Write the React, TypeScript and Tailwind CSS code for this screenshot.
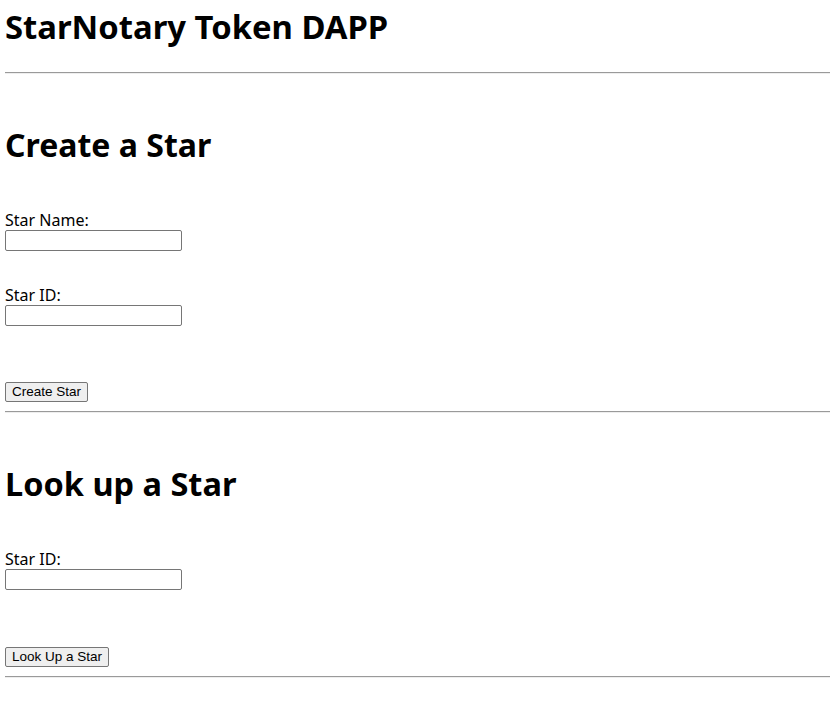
import React from 'react';

const Rule: React.FC<{ className?: string }> = ({ className = '' }) => (
  <hr className={`h-0 border-0 border-t border-t-[#9a9a9a] border-b border-b-[#eeeeee] ${className}`} />
);

const Field: React.FC<{ label: string; className?: string }> = ({ label, className = '' }) => (
  <div className={className}>
    <label className="block text-[16px] leading-[20px] text-black">{label}</label>
    <input
      type="text"
      className="block w-[177px] h-[21px] border border-[#767676] rounded-[2px] bg-white px-[2px] text-[13.33px] outline-none"
    />
  </div>
);

const Button: React.FC<{ children: React.ReactNode; className?: string }> = ({ children, className = '' }) => (
  <button
    className={`block h-[20px] px-[6px] border border-[#767676] rounded-[2px] bg-[#efefef] text-[13.5px] leading-[16px] text-black ${className}`}
    style={{ fontFamily: '"Liberation Sans", Arial, sans-serif' }}
  >
    {children}
  </button>
);

export default function App() {
  return (
    <div
      className="min-h-[707px] bg-white pt-[6.6px] pl-[5px] pr-[1px] text-black"
      style={{ fontFamily: '"Noto Sans", "Open Sans", sans-serif' }}
    >
      <h1 className="text-[32.8px] leading-[40px] font-bold">StarNotary Token DAPP</h1>
      <Rule className="mt-[25.4px]" />

      {/* Create a star */}
      <h2 className="mt-[49px] text-[32px] leading-[44px] font-bold">Create a Star</h2>
      <Field label="Star Name:" className="mt-[43.4px]" />
      <Field label="Star ID:" className="mt-[34px]" />
      <Button className="mt-[56px]">Create Star</Button>
      <Rule className="mt-[9px]" />

      {/* Look up a star */}
      <h2 className="mt-[48.4px] text-[32.5px] leading-[44px] font-bold">Look up a Star</h2>
      <Field label="Star ID:" className="mt-[43px]" />
      <Button className="mt-[57px]">Look Up a Star</Button>
      <Rule className="mt-[9px]" />
    </div>
  );
}
